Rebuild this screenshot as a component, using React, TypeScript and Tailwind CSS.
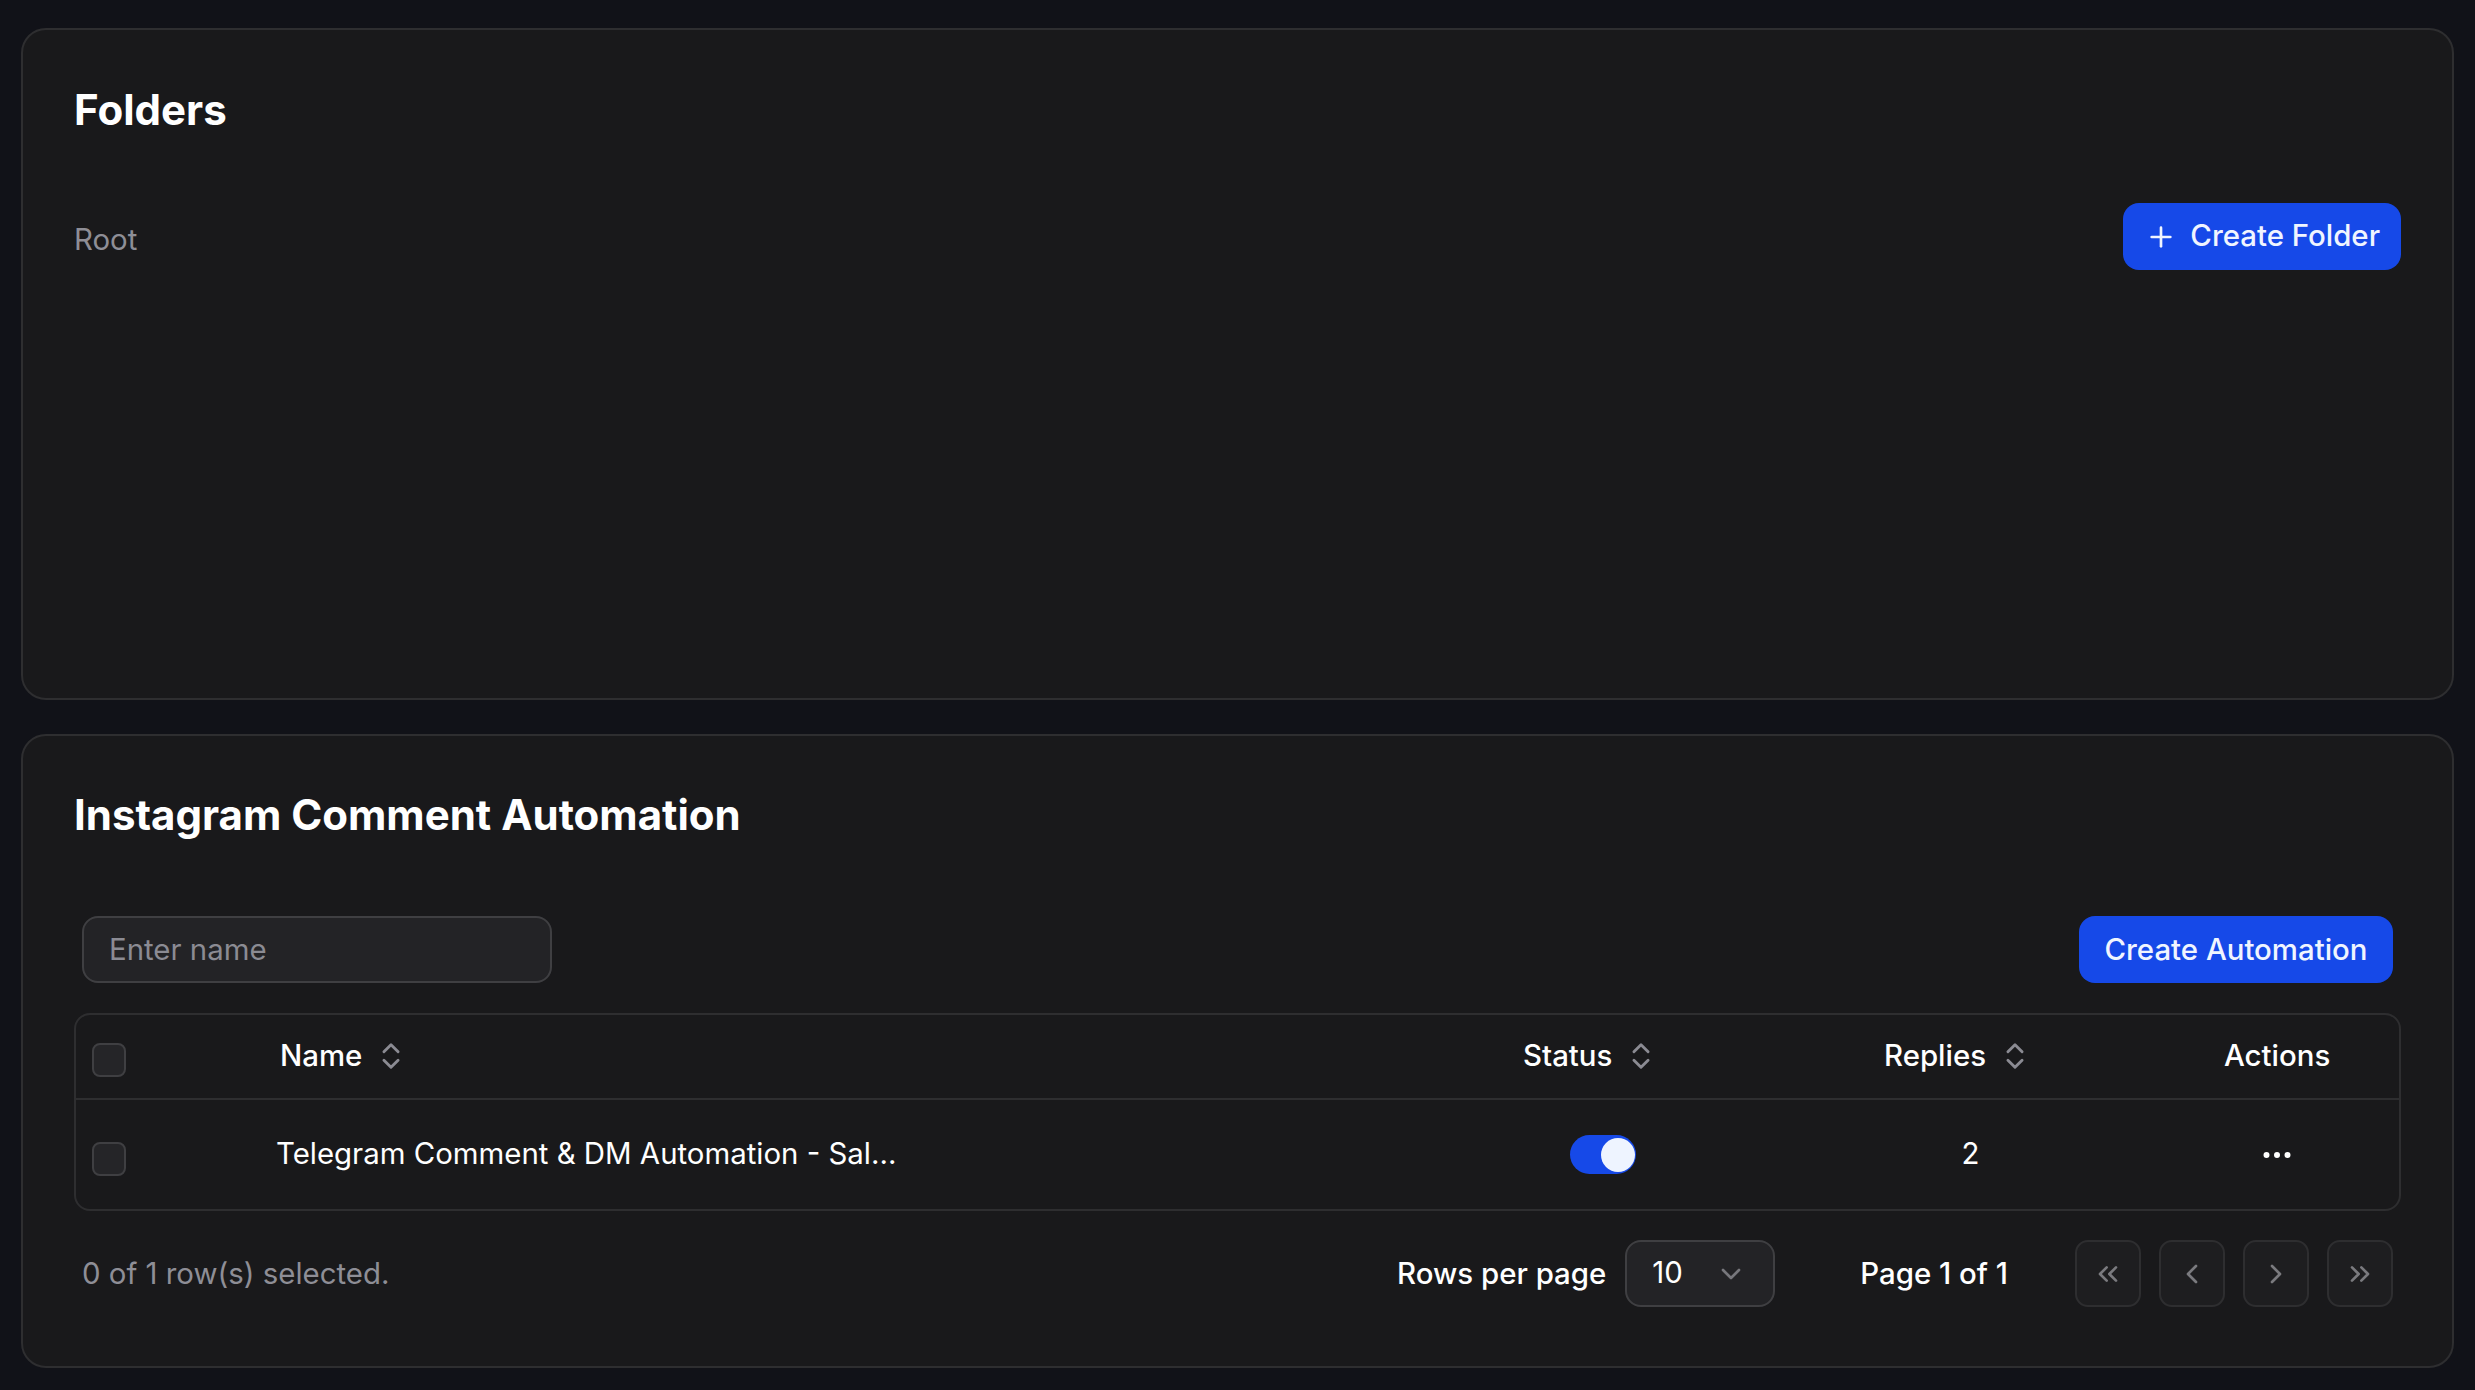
import { ChevronDown, ChevronLeft, ChevronRight, ChevronsLeft, ChevronsRight, ChevronsUpDown, Ellipsis, Plus } from 'lucide-react';

function Checkbox({ className = '' }: { className?: string }) {
	return <div className={`w-[34px] h-[34px] rounded-[8px] border-2 border-[#3f3f42] bg-[#252528] ${className}`} />;
}

function SortHeader({ label, className = '' }: { label: string; className?: string }) {
	return (
		<div className={`flex items-center gap-[12px] font-medium text-white ${className}`}>
			<span>{label}</span>
			<ChevronsUpDown className="w-[34px] h-[34px] text-[#8b8b93]" strokeWidth={2} />
		</div>
	);
}

function PageButton({ children }: { children: React.ReactNode }) {
	return (
		<button className="w-[66px] h-[67px] flex items-center justify-center rounded-[13px] border-2 border-[#2e2e30] bg-[#1e1e20] text-[#7a7a7e]">
			{children}
		</button>
	);
}

export default function App() {
	return (
		<div className="min-h-screen bg-[#111218] pt-[28px] px-[21px] pb-[22px] flex flex-col gap-[34px] text-[29.4px] text-white font-['Inter',sans-serif]">
			<section className="h-[672px] rounded-[25px] border-2 border-[#2e2e30] bg-[#19191b] px-[51px] pt-[48px]">
				<h2 className="text-[42px] leading-[64px] font-bold">Folders</h2>
				<div className="flex items-center justify-between mt-[61px]">
					<span className="text-[#8e8e96] mt-[7px]">Root</span>
					<button className="h-[67px] pl-[22px] pr-[21px] flex items-center gap-[13px] rounded-[16px] bg-[#1649e8] font-medium text-[#f0f5ff]">
						<Plus className="w-[32px] h-[32px]" strokeWidth={2} />
						Create Folder
					</button>
				</div>
			</section>

			<section className="h-[634px] rounded-[25px] border-2 border-[#2e2e30] bg-[#19191b] px-[51px] pt-[47px]">
				<h2 className="text-[42px] leading-[64px] font-bold">Instagram Comment Automation</h2>
				<div className="flex items-center justify-between mt-[69px] pl-[8px] pr-[8px]">
					<input
						placeholder="Enter name"
						className="w-[470px] h-[67px] px-[25px] rounded-[16px] border-2 border-[#3f3f42] bg-[#232326] outline-none placeholder:text-[#8b8b93]"
					/>
					<button className="h-[67px] w-[314px] rounded-[16px] bg-[#1649e8] pt-[1px] font-medium text-[#f0f5ff]">Create Automation</button>
				</div>

				<div className="mt-[30px] rounded-[16px] border-2 border-[#2e2e30]">
					<div className="h-[85px] grid grid-cols-[200px_1fr_327px_408px_225px] items-center border-b-2 border-[#2e2e30]">
						<Checkbox className="ml-[16px] mt-[6px]" />
						<SortHeader label="Name" className="pl-[4px]" />
						<SortHeader label="Status" className="pl-[84px]" />
						<SortHeader label="Replies" className="pl-[118px]" />
						<span className="pl-[50px] font-medium">Actions</span>
					</div>
					<div className="h-[109px] grid grid-cols-[200px_1fr_327px_408px_225px] items-center">
						<Checkbox className="ml-[16px] mt-[9px]" />
						<span>Telegram Comment &amp; DM Automation - Sal...</span>
						<div className="flex justify-center">
							<div className="w-[66px] h-[39px] rounded-full bg-[#1649e8] flex items-center justify-end pr-[1px]">
								<div className="w-[34px] h-[34px] rounded-full bg-[#eef4ff]" />
							</div>
						</div>
						<span className="text-center pl-[1px]">2</span>
						<div className="flex justify-center pr-[20px]">
							<Ellipsis className="w-[36px] h-[36px]" strokeWidth={2} />
						</div>
					</div>
				</div>

				<div className="flex items-center justify-between mt-[29px] pl-[8px] pr-[8px]">
					<span className="text-[#8e8e96] pt-[1px]">0 of 1 row(s) selected.</span>
					<div className="flex items-center">
						<span className="font-medium pt-[1px]">Rows per page</span>
						<div className="ml-[19px] w-[150px] h-[67px] pl-[25px] pr-[26px] flex items-center justify-between rounded-[16px] border-2 border-[#3f3f42] bg-[#232326]">
							<span>10</span>
							<ChevronDown className="w-[32px] h-[32px] text-[#77777c]" strokeWidth={2} />
						</div>
						<span className="ml-[85px] font-medium pt-[1px]">Page 1 of 1</span>
						<div className="ml-[67px] flex items-center gap-[18px]">
							<PageButton><ChevronsLeft className="w-[32px] h-[32px]" /></PageButton>
							<PageButton><ChevronLeft className="w-[32px] h-[32px]" /></PageButton>
							<PageButton><ChevronRight className="w-[32px] h-[32px]" /></PageButton>
							<PageButton><ChevronsRight className="w-[32px] h-[32px]" /></PageButton>
						</div>
					</div>
				</div>
			</section>
		</div>
	);
}
